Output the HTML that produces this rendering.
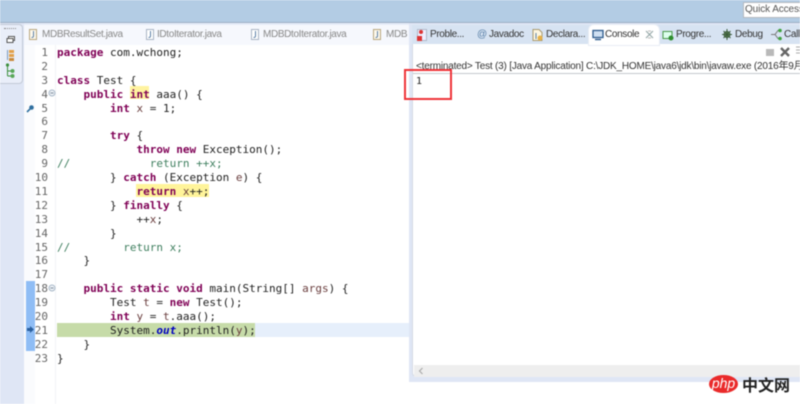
<!DOCTYPE html>
<html><head><meta charset="utf-8">
<style>
html,body{margin:0;padding:0;background:#fff}
#r{position:relative;width:800px;height:404px;overflow:hidden;background:#fff;filter:blur(.4px)}
#r div,#r svg{position:absolute}
.l{left:57px;height:14px;margin-top:1px;font:11px/14px "DejaVu Sans Mono","Liberation Mono",monospace;color:#222;white-space:pre}
.n{left:30px;width:18px;text-align:right;height:14px;margin-top:1px;font:11px/14px "DejaVu Sans Mono","Liberation Mono",monospace;color:#666}
b{color:#7f0055;font-weight:bold}
i.f{color:#0000c0;font-weight:bold;font-style:italic}
.c{color:#3f7f5f}
.v{color:#6a3e3e}
.t{font:10px/14px "Liberation Sans",sans-serif;color:#333;white-space:nowrap;letter-spacing:-.35px}
.g{color:#888}
</style></head><body>
<div id="r">
<div style="left:0;top:0;width:800px;height:22px;background:#b3cce4"></div>
<div style="left:0;top:22px;width:800px;height:1px;background:#9fb0c4"></div>
<div style="left:0;top:23px;width:24px;height:381px;background:#dfe6f5"></div>
<div style="left:24px;top:23px;width:388px;height:2px;background:#e6ecf8"></div>
<div style="left:-3px;top:24px;width:24px;height:58px;background:#e9eef9;border:1px solid #c3cad6;border-radius:4px"></div>
<div style="left:4px;top:28px;width:12px;height:1px;border-top:1px dotted #888"></div>
<svg style="left:5px;top:35px" width="14" height="50" viewBox="0 0 14 50">
<rect x="3.500" y="1.500" width="6" height="4" fill="#fff" stroke="#555"/><rect x="2" y="3.500" width="6" height="4" fill="#fff" stroke="#555"/>
<path d="M2.500 15v10" stroke="#7a9abf" fill="none"/><rect x="4" y="15" width="5" height="3" fill="#e2a048"/><rect x="4" y="19" width="5" height="3" fill="#e2a048"/><rect x="4" y="23" width="5" height="3" fill="#c98a3a"/>
<path d="M2.500 31v10M2.500 36h5M2.500 41h5" stroke="#3c8f3c" fill="none"/><circle cx="2.500" cy="30" r="1.600" fill="#3c8f3c"/><circle cx="7.500" cy="36" r="2" fill="#58a858"/><circle cx="7.500" cy="41" r="2" fill="#58a858"/>
</svg>

<div style="left:24px;top:25px;width:386px;height:20px;background:#f6f8fd"></div>
<svg style="left:28px;top:28px" width="10" height="13"><path d="M1.500 1.500h7v10h-7z" fill="#fdf8ec" stroke="#b9a77f"/><path d="M5.500 3v5q0 1.500-2 1.500" stroke="#5b7fa6" fill="none"/></svg>
<div class="t g" style="left:42px;top:28px">MDBResultSet.java</div>
<svg style="left:145px;top:28px" width="10" height="13"><path d="M1.500 1.500h7v10h-7z" fill="#fff" stroke="#a9b4c4"/><path d="M5.500 3v5q0 1.500-2 1.500" stroke="#5b7fa6" fill="none"/></svg>
<div class="t g" style="left:157px;top:28px">IDtoIterator.java</div>
<svg style="left:250px;top:28px" width="10" height="13"><path d="M1.500 1.500h7v10h-7z" fill="#fff" stroke="#a9b4c4"/><path d="M5.500 3v5q0 1.500-2 1.500" stroke="#5b7fa6" fill="none"/></svg>
<div class="t g" style="left:263px;top:28px">MDBDtoIterator.java</div>
<svg style="left:372px;top:28px" width="10" height="13"><path d="M1.500 1.500h7v10h-7z" fill="#fdf8ec" stroke="#b9a77f"/><path d="M5.500 3v5q0 1.500-2 1.500" stroke="#5b7fa6" fill="none"/></svg>
<div class="t g" style="left:386px;top:28px;width:24px;overflow:hidden">MDB</div>

<div style="left:24px;top:45px;width:11px;height:359px;background:#fafbfd"></div>
<div style="left:55px;top:45px;width:1px;height:359px;background:#f2f3f6"></div>
<div style="left:26px;top:281px;width:9px;height:70px;background:#8fbdf5"></div>
<div style="left:57px;top:323px;width:353px;height:14px;background:#e6effb"></div>
<div style="left:57px;top:323px;width:198px;height:14px;background:#c6dba8"></div>
<div style="left:130px;top:86px;width:19px;height:13px;background:#fff3a0"></div>
<div style="left:136px;top:184px;width:73px;height:13px;background:#fff49a"></div>

<svg style="left:26px;top:104px" width="9" height="9"><circle cx="5.500" cy="3.500" r="2.300" fill="#2f6f9f"/><path d="M4 5L1 8" stroke="#2f6f9f" stroke-width="1.600"/></svg>
<svg style="left:26px;top:325px" width="9" height="9"><path d="M1 3h3V1l4 3.500L4 8V6H1z" fill="#2a5f9e"/></svg>
<svg style="left:48px;top:89px" width="8" height="8"><circle cx="4" cy="4" r="3" fill="#eef2f6" stroke="#a8b8c8"/><path d="M2.500 4h3" stroke="#7a8a9a"/></svg>
<svg style="left:48px;top:284px" width="8" height="8"><circle cx="4" cy="4" r="3" fill="#eef2f6" stroke="#a8b8c8"/><path d="M2.500 4h3" stroke="#7a8a9a"/></svg>

<div class="n" style="top:45px">1</div>
<div class="n" style="top:59px">2</div>
<div class="n" style="top:73px">3</div>
<div class="n" style="top:87px">4</div>
<div class="n" style="top:101px">5</div>
<div class="n" style="top:114px">6</div>
<div class="n" style="top:128px">7</div>
<div class="n" style="top:142px">8</div>
<div class="n" style="top:156px">9</div>
<div class="n" style="top:170px">10</div>
<div class="n" style="top:184px">11</div>
<div class="n" style="top:198px">12</div>
<div class="n" style="top:212px">13</div>
<div class="n" style="top:226px">14</div>
<div class="n" style="top:240px">15</div>
<div class="n" style="top:253px">16</div>
<div class="n" style="top:267px">17</div>
<div class="n" style="top:281px">18</div>
<div class="n" style="top:295px">19</div>
<div class="n" style="top:309px">20</div>
<div class="n" style="top:323px">21</div>
<div class="n" style="top:337px">22</div>
<div class="n" style="top:351px">23</div>

<div class="l" style="top:45px"><b>package</b> com.wchong;</div>
<div class="l" style="top:73px"><b>class</b> Test {</div>
<div class="l" style="top:87px">    <b>public</b> <b>int</b> aaa() {</div>
<div class="l" style="top:101px">        <b>int</b> <span class="v">x</span> = 1;</div>
<div class="l" style="top:128px">        <b>try</b> {</div>
<div class="l" style="top:142px">            <b>throw</b> <b>new</b> Exception();</div>
<div class="l c" style="top:156px">//            return ++x;</div>
<div class="l" style="top:170px">        } <b>catch</b> (Exception <span class="v">e</span>) {</div>
<div class="l" style="top:184px">            <b>return</b> <span class="v">x</span>++;</div>
<div class="l" style="top:198px">        } <b>finally</b> {</div>
<div class="l" style="top:212px">            ++<span class="v">x</span>;</div>
<div class="l" style="top:226px">        }</div>
<div class="l c" style="top:240px">//        return x;</div>
<div class="l" style="top:253px">    }</div>
<div class="l" style="top:281px">    <b>public</b> <b>static</b> <b>void</b> main(String[] <span class="v">args</span>) {</div>
<div class="l" style="top:295px">        Test <span class="v">t</span> = <b>new</b> Test();</div>
<div class="l" style="top:309px">        <b>int</b> <span class="v">y</span> = <span class="v">t</span>.aaa();</div>
<div class="l" style="top:323px">        System.<i class="f">out</i>.println(<span class="v">y</span>);</div>
<div class="l" style="top:337px">    }</div>
<div class="l" style="top:351px">}</div>

<div style="left:409px;top:23px;width:391px;height:359px;background:#dfe6f5"></div>
<div style="left:412px;top:25px;width:388px;height:19px;background:#d7e3f2"></div>
<div style="left:412px;top:44px;width:388px;height:333px;background:#fff;border-left:1px solid #d5dae4;border-bottom:1px solid #d5dae4;border-bottom-left-radius:4px;box-sizing:border-box"></div>
<div style="left:589px;top:25px;width:70px;height:20px;background:#fff;border-radius:5px 5px 0 0;box-shadow:0 0 0 1px #e8edf5"></div>

<svg style="left:416px;top:28px" width="12" height="14"><rect x="1.500" y="1.500" width="9" height="11" fill="#eef" stroke="#b0b8c8"/><circle cx="5" cy="4" r="2" fill="#d33"/><rect x="1" y="8" width="5" height="5" fill="#d33"/></svg>
<div class="t" style="left:430px;top:28px">Proble...</div>
<div class="t" style="left:477px;top:28px;color:#5a80a8">@</div>
<div class="t" style="left:489px;top:28px">Javadoc</div>
<svg style="left:531px;top:28px" width="13" height="14"><path d="M2 1.500h6l3 3v8h-9z" fill="#fdf6e0" stroke="#a99a70"/><path d="M5 5v6" stroke="#5b7fa6"/><circle cx="9" cy="10" r="2.500" fill="#e6b24a"/></svg>
<div class="t" style="left:546px;top:28px">Declara...</div>
<svg style="left:592px;top:29px" width="12" height="12"><rect x="1" y="1.500" width="10" height="7" fill="#cfe0f2" stroke="#2c5a8c" stroke-width="1.300"/><path d="M3 10.500h6" stroke="#2c5a8c" stroke-width="1.400"/></svg>
<div class="t" style="left:605px;top:28px">Console</div>
<svg style="left:645px;top:30px" width="9" height="9"><path d="M1 1l7 7M8 1L1 8" stroke="#9aa" stroke-width="1.200"/><path d="M3 1h3M3 8h3" stroke="#bbb"/></svg>
<svg style="left:662px;top:30px" width="13" height="11"><rect x="1" y="1.500" width="9" height="7" fill="#dfe" stroke="#4a9a4a"/><circle cx="9" cy="8" r="2.500" fill="#2f8f2f"/></svg>
<div class="t" style="left:676px;top:28px">Progre...</div>
<svg style="left:721px;top:28px" width="12" height="13"><circle cx="6" cy="6.500" r="3" fill="#7aa86a" stroke="#3c5c3c"/><path d="M6 1v11M1 6.500h10M2.500 3l7 7M9.500 3l-7 7" stroke="#3c5c3c"/></svg>
<div class="t" style="left:735px;top:28px">Debug</div>
<svg style="left:770px;top:28px" width="13" height="13"><path d="M1 6.500h4l3-4h3M5 6.500l3 4h3" fill="none" stroke="#777"/><circle cx="10" cy="2.500" r="1.800" fill="#3fa33f"/><circle cx="10" cy="10.500" r="1.800" fill="#3fa33f"/></svg>
<div class="t" style="left:784px;top:28px">Call</div>

<div style="left:743px;top:2px;width:60px;height:16px;background:#fff;border:1px solid #b4b9c0;box-sizing:border-box"></div>
<div class="t" style="left:745px;top:3px;color:#555;letter-spacing:-.1px">Quick Access</div>

<div style="left:766px;top:49px;width:8px;height:7px;background:#b9b9b9"></div>
<svg style="left:780px;top:47px" width="10" height="10"><path d="M1 1l8 8M9 1L1 9" stroke="#666" stroke-width="2.400"/></svg>
<svg style="left:796px;top:46px" width="4" height="9"><path d="M0 1h4M0 4h4M0 7h4" stroke="#aaa"/></svg>

<div class="t" style="left:416px;top:60px;letter-spacing:-.2px;font-family:'Liberation Sans','Noto Sans CJK SC',sans-serif">&lt;terminated&gt; Test (3) [Java Application] C:\JDK_HOME\java6\jdk\bin\javaw.exe (2016年9月</div>
<div style="left:413px;top:73px;width:387px;height:1px;background:#c4c8ce"></div>
<div class="l" style="left:416px;top:74px;font-size:10px;color:#222">1</div>
<div style="left:404px;top:69px;width:48px;height:31px;border:2px solid #ee3338;box-sizing:border-box"></div>

<div style="left:414px;top:365px;width:386px;height:12px;background:#eeeeee"></div>
<svg style="left:418px;top:367px" width="6" height="8"><path d="M4.500 1L1.500 4l3 3" fill="none" stroke="#aaa" stroke-width="1.200"/></svg>

<div style="left:709px;top:375px;width:29px;height:18px;border-radius:50%;background:#ea2a2a"></div>
<div style="left:709px;top:376px;width:29px;height:16px;font:italic 14px/15px 'Liberation Sans',sans-serif;color:#fff;text-align:center">php</div>
<div style="left:742px;top:374px;width:50px;height:20px;font:bold 16px/20px 'Noto Sans CJK SC','WenQuanYi Zen Hei',sans-serif;color:#222;white-space:nowrap">中文网</div>
</div>
</body></html>
